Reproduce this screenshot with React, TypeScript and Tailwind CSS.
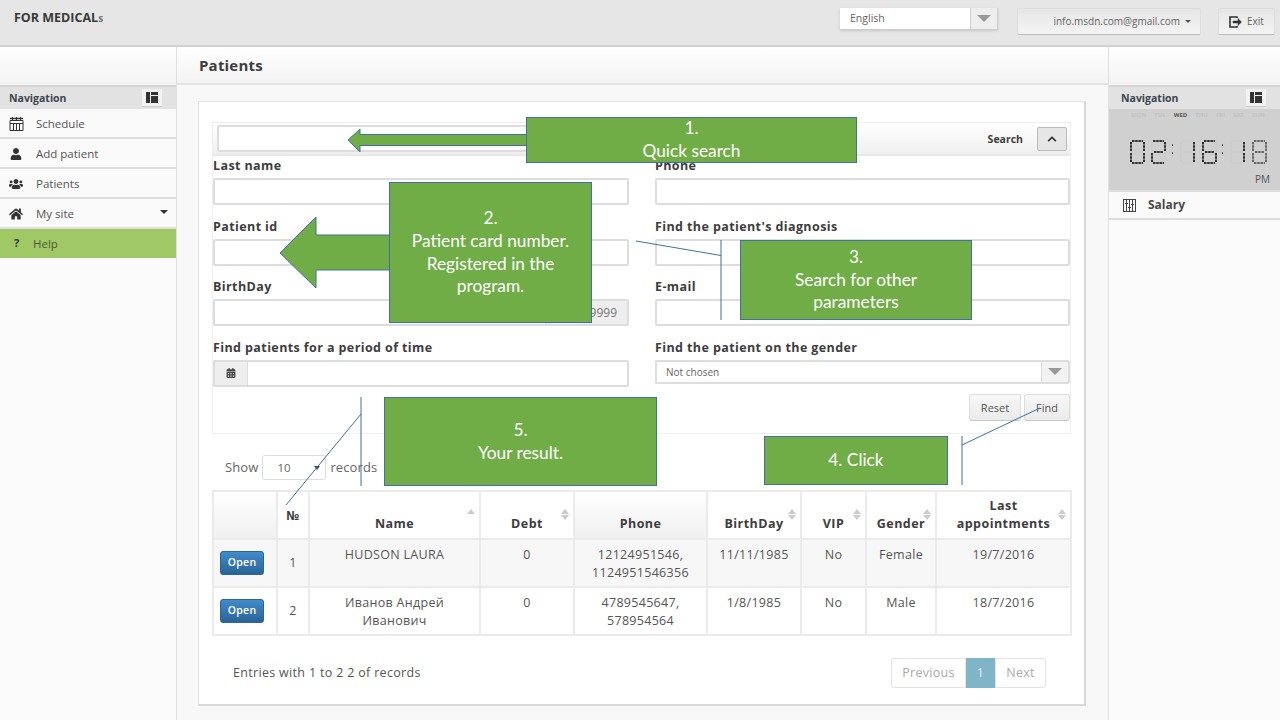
import React from "react";
import { FaUser, FaUsers, FaHome, FaCalendarAlt, FaChevronUp } from "react-icons/fa";

const font = { fontFamily: '"Open Sans","Noto Sans",sans-serif' };

function PanelIcon() {
  return (
    <svg width="12" height="11" viewBox="0 0 12 11" fill="#333">
      <rect x="0" y="0" width="4" height="11" />
      <rect x="5" y="0" width="7" height="3" />
      <rect x="5" y="4" width="7" height="7" />
    </svg>
  );
}

function CalIcon() {
  return (
    <svg width="15" height="14" viewBox="0 0 15 14" fill="none" stroke="#333">
      <path d="M1 3.5h13v10H1z" />
      <path d="M1 1.5h13" strokeWidth="1.5" />
      <path d="M3.5 0v3M7.5 0v3M11.5 0v3" />
      <path d="M1 6.5h13M4.5 6.5v7M7.5 6.5v7M10.5 6.5v7" />
    </svg>
  );
}

function SalaryIcon() {
  return (
    <svg width="13" height="13" viewBox="0 0 13 13" fill="none" stroke="#444">
      <rect x="0.5" y="0.5" width="12" height="12" />
      <path d="M3.5 1v11M6.5 1v11M9.5 1v11" />
      <path d="M2 4.5h3M5 8.5h3M8 5.5h3" />
    </svg>
  );
}

function ExitIcon() {
  return (
    <svg width="13" height="12" viewBox="0 0 13 12" fill="none" stroke="#333" strokeWidth="1.6">
      <path d="M8 2V1H1v10h7V10" />
      <path d="M4 5h5V2.5L12.5 6 9 9.5V7H4z" fill="#333" strokeWidth="0.5" />
    </svg>
  );
}

const SEG: Record<string, string> = {
  "0": "abcdef",
  "1": "bc",
  "2": "abged",
  "6": "acdefg",
  "8": "abcdefg",
};

function Digit({ d, ghost }: { d: string; ghost?: boolean }) {
  const on = SEG[d];
  const lines: Record<string, [number, number, number, number]> = {
    a: [2, 1, 13, 1],
    b: [14, 2, 14, 11],
    c: [14, 13, 14, 22],
    d: [2, 23, 13, 23],
    e: [1, 13, 1, 22],
    f: [1, 2, 1, 11],
    g: [3, 12, 12, 12],
  };
  return (
    <svg width="15" height="24" viewBox="0 0 15 24" className="shrink-0">
      {Object.keys(lines).map((k) => {
        const [x1, y1, x2, y2] = lines[k];
        const isOn = on.includes(k);
        return (
          <line
            key={k}
            x1={x1}
            y1={y1}
            x2={x2}
            y2={y2}
            stroke={isOn ? (ghost ? "#666" : "#2f2f2f") : "#cbcbcb"}
            strokeWidth="2"
            strokeDasharray="2.5 0.7"
          />
        );
      })}
    </svg>
  );
}

function Colon() {
  return (
    <div className="flex flex-col gap-[6px] w-[1px] mt-[-7px] shrink-0">
      <span className="block w-[1px] h-[2px] bg-[#555]" />
      <span className="block w-[1px] h-[2px] bg-[#555]" />
    </div>
  );
}

function NavHead({ left }: { left: string }) {
  return (
    <div className={`h-[24px] bg-[#e2e2e2] border-t-2 border-[#d4d4d4] flex items-center justify-between pr-[14px] ${left}`}>
      <span className="text-[10.5px] font-bold text-[#3c4650] pt-[2px]">Navigation</span>
      <span className="w-[20px] h-[18px] bg-[#f2f2f2] flex items-center justify-center border-b border-[#ccc]">
        <PanelIcon />
      </span>
    </div>
  );
}

function NavItem({ icon, label, caret }: { icon: React.ReactNode; label: string; caret?: boolean }) {
  return (
    <div className="h-[30px] pt-[2px] flex items-center border-b-2 border-[#ddd] bg-[#fafafa] relative text-[11.5px] text-[#555]">
      <span className="w-[32px] mr-[4px] flex justify-center text-[#333] text-[14px]">{icon}</span>
      <span>{label}</span>
      {caret && <span className="ml-auto mr-[8px] mt-[-4px] border-x-[4px] border-t-[4px] border-x-transparent border-t-[#333]" />}
    </div>
  );
}

function Field({ label, children }: { label: string; children?: React.ReactNode }) {
  return (
    <div className="h-[60.5px]">
      <div className="h-[18px] text-[12.5px] font-bold text-[#3d3d3d] tracking-[0.4px] leading-[20px]">{label}</div>
      <div className="h-[27px] mt-[4px]">
        {children ?? <div className="h-full border-2 border-[#ddd] rounded-[2px] bg-white" />}
      </div>
    </div>
  );
}

function Sort({ only }: { only?: boolean }) {
  return (
    <span className="absolute right-[4px] top-[17px] flex flex-col gap-[1px]">
      <span className="border-x-[4px] border-b-[5px] border-x-transparent border-b-[#ccc]" />
      {!only && <span className="border-x-[4px] border-t-[5px] border-x-transparent border-t-[#ccc]" />}
    </span>
  );
}

const th = "border-2 border-[#ebebeb] relative align-bottom pb-[6px] px-[4px] text-[12.5px] font-bold text-[#3d3d3d] tracking-[0.45px] leading-[17.5px] text-center bg-white";
const td = "border-2 border-[#ebebeb] align-top pt-[6px] px-[4px] text-[12.5px] text-[#555] tracking-[0.3px] leading-[17.5px] text-center";

function OpenBtn() {
  return (
    <span className="inline-block w-[44px] h-[24px] rounded-[3px] bg-gradient-to-b from-[#428bca] to-[#2a6496] border border-[#2b669a] text-white text-[10.5px] font-semibold leading-[20px] text-center">
      Open
    </span>
  );
}

function Callout({ className, lines }: { className: string; lines: string[] }) {
  return (
    <div
      className={`absolute bg-[#70ad47] border border-[#41719c] text-white text-[17.3px] leading-[22.8px] text-center flex flex-col items-center justify-center ${className}`}
      style={{ fontFamily: '"Lato","Open Sans",sans-serif' }}
    >
      {lines.map((l) => (
        <div key={l}>{l}</div>
      ))}
    </div>
  );
}

export default function App() {
  return (
    <div className="relative w-[1280px] h-[720px] overflow-hidden bg-[#f8f8f8] flex flex-col" style={font}>
      <header className="h-[47px] shrink-0 bg-[#e6e6e6] border-b-2 border-[#d2d2d2] flex items-start">
        <div className="ml-[14px] mt-[9px] text-[12.5px] font-bold text-[#3a3a3a] leading-[18px]">
          FOR MEDICAL<span className="text-[#777] text-[10px]">s</span>
        </div>
        <div className="ml-auto mt-[8px] w-[158px] h-[22px] bg-white border-b border-r border-[#ccc] flex text-[10.5px] text-[#666] items-center shadow-sm">
          <span className="pl-[10px] flex-1 pt-[1px]">English</span>
          <span className="w-[27px] h-full border-l border-[#ccc] bg-[#eee] flex items-center justify-center">
            <span className="border-x-[7px] border-t-[7px] border-x-transparent border-t-[#999]" />
          </span>
        </div>
        <div className="ml-[19px] mt-[8px] w-[184px] h-[27px] rounded-[2px] bg-gradient-to-b from-[#e6e6e6] to-[#f4f4f4] border border-[#ddd] border-b-[#bbb] flex items-center justify-end pr-[9px] text-[10px] text-[#666]">
          info.msdn.com@gmail.com
          <span className="ml-[5px] border-x-[3px] border-t-[3px] border-x-transparent border-t-[#555]" />
        </div>
        <div className="ml-[17px] mr-[5px] mt-[8px] w-[57px] h-[27px] rounded-[2px] bg-gradient-to-b from-[#e6e6e6] to-[#f4f4f4] border border-[#ddd] border-b-[#bbb] flex items-center justify-center gap-[5px] text-[10px] text-[#666]">
          <ExitIcon />
          Exit
        </div>
      </header>

      <div className="flex flex-1 min-h-0">
        <aside className="w-[177px] shrink-0 border-r border-[#e0e0e0] bg-[#fbfbfb]">
          <div className="h-[38px] bg-gradient-to-b from-white to-[#f3f3f3]" />
          <NavHead left="pl-[9px]" />
          <NavItem icon={<CalIcon />} label="Schedule" />
          <NavItem icon={<FaUser className="text-[12px]" />} label="Add patient" />
          <NavItem icon={<FaUsers />} label="Patients" />
          <NavItem icon={<FaHome />} label="My site" caret />
          <div className="h-[29px] bg-[#a0c864] flex items-center text-[11.5px] text-[#4a5a3a]">
            <span className="w-[33px] text-center text-[#333] font-bold text-[11px]">?</span>
            Help
          </div>
        </aside>

        <main className="flex-1 min-w-0 bg-[#f8f8f8] flex flex-col">
          <div className="h-[38px] shrink-0 bg-gradient-to-b from-white to-[#f3f3f3] border-b-2 border-[#e4e4e4] pl-[22px] text-[15px] font-bold text-[#3d3d3d] leading-[36px] tracking-[0.2px]">
            Patients
          </div>
          <section className="ml-[21px] mt-[16px] w-[888px] h-[605px] bg-white border border-[#e4e4e4] border-r-2 border-b-2 border-r-[#d8d8d8] border-b-[#d8d8d8] pt-[20px] pl-[13px] text-[#555]">
            <div className="w-[859px] h-[312px] border border-[#f0f0f0] border-t-[#eee]">
              <div className="h-[33px] bg-gradient-to-b from-white to-[#f0f0f0] border-b-2 border-[#e8e8e8] flex items-center pl-[4px] pr-[3px]">
                <div className="w-[340px] h-[27px] border-2 border-[#ddd] rounded-[2px] bg-white" />
                <span className="ml-auto text-[10.5px] font-bold text-[#3d3d3d] mt-[3px]">Search</span>
                <span className="ml-[14px] w-[30px] h-[24px] bg-[#e6e6e6] border border-[#bbb] rounded-[2px] flex items-center justify-center text-[#333] text-[10px]">
                  <FaChevronUp />
                </span>
              </div>
              <div className="grid grid-cols-[416px_415px] gap-x-[26px]">
                <div>
                  <Field label="Last name" />
                  <Field label="Patient id" />
                  <Field label="BirthDay">
                    <div className="h-full border-2 border-[#ddd] rounded-[2px] bg-white flex justify-end">
                      <span className="w-[82px] bg-[#eee] border-l border-[#ddd] text-[12px] text-[#777] leading-[23px] text-right pr-[10px]">99/99/9999</span>
                    </div>
                  </Field>
                  <Field label="Find patients for a period of time">
                    <div className="h-full border-2 border-[#ddd] rounded-[2px] bg-white flex">
                      <span className="w-[33px] bg-[#eee] border-r border-[#ddd] flex items-center justify-center text-[10px] text-[#444]">
                        <FaCalendarAlt />
                      </span>
                    </div>
                  </Field>
                </div>
                <div>
                  <Field label="Phone" />
                  <Field label="Find the patient's diagnosis" />
                  <Field label="E-mail" />
                  <Field label="Find the patient on the gender">
                    <div className="h-[24px] border-2 border-[#ddd] rounded-[2px] bg-white flex items-center text-[10px] text-[#666]">
                      <span className="pl-[9px] flex-1 pt-[1px]">Not chosen</span>
                      <span className="w-[27px] h-full border-l border-[#ddd] bg-[#f2f2f2] flex items-center justify-center">
                        <span className="border-x-[7px] border-t-[7px] border-x-transparent border-t-[#999]" />
                      </span>
                    </div>
                  </Field>
                </div>
              </div>
              <div className="flex justify-end gap-[3px] mt-[-4px]">
                <span className="w-[52px] h-[27px] bg-gradient-to-b from-[#f7f7f7] to-[#ebebeb] border border-[#ddd] border-b-[#c8c8c8] rounded-[3px] text-[11px] text-[#555] text-center leading-[25px]">Reset</span>
                <span className="w-[46px] h-[27px] bg-gradient-to-b from-[#f7f7f7] to-[#ebebeb] border border-[#ddd] border-b-[#c8c8c8] rounded-[3px] text-[11px] text-[#555] text-center leading-[25px]">Find</span>
              </div>
            </div>

            <div className="flex items-center h-[25px] mt-[21px] pl-[13px] text-[13px] text-[#666] tracking-[0.1px]">
              Show
              <span className="ml-[4px] w-[64px] h-[25px] border border-[#ddd] rounded-[3px] flex items-center pl-[14px] pr-[5px] text-[11.5px]">
                10
                <span className="ml-auto border-x-[3px] border-t-[4px] border-x-transparent border-t-[#444]" />
              </span>
              <span className="ml-[4px]">records</span>
            </div>

            <table className="w-[858px] mt-[10px] border-collapse table-fixed">
              <colgroup>
                <col className="w-[64px]" />
                <col className="w-[32px]" />
                <col className="w-[171px]" />
                <col className="w-[94px]" />
                <col className="w-[133px]" />
                <col className="w-[94px]" />
                <col className="w-[65px]" />
                <col className="w-[70px]" />
                <col className="w-[135px]" />
              </colgroup>
              <thead>
                <tr className="h-[48px]">
                  <th className="border-2 border-[#ebebeb] bg-gradient-to-b from-white to-[#f0f0f0]" />
                  <th className={`${th} !align-top pt-[15px] !px-0`}>№</th>
                  <th className={th}>Name<Sort only /></th>
                  <th className={th}>Debt<Sort /></th>
                  <th className={`${th} !bg-gradient-to-b from-white to-[#f0f0f0]`}>Phone</th>
                  <th className={th}>BirthDay<Sort /></th>
                  <th className={th}>VIP<Sort /></th>
                  <th className={`${th} !px-0`}>Gender<Sort /></th>
                  <th className={th}>Last<br />appointments<Sort /></th>
                </tr>
              </thead>
              <tbody>
                <tr className="h-[48px] bg-[#f7f7f7]">
                  <td className={`${td} !align-middle !pt-0 !pb-[1px] !pl-0 !pr-[6px]`}><OpenBtn /></td>
                  <td className={`${td} !align-middle !pt-0 !px-0`}>1</td>
                  <td className={td}>HUDSON LAURA</td>
                  <td className={td}>0</td>
                  <td className={td}>12124951546,<br />1124951546356</td>
                  <td className={`${td} !px-0`}>11/11/1985</td>
                  <td className={td}>No</td>
                  <td className={td}>Female</td>
                  <td className={td}>19/7/2016</td>
                </tr>
                <tr className="h-[48px] bg-white">
                  <td className={`${td} !align-middle !pt-0 !pb-[1px] !pl-0 !pr-[6px]`}><OpenBtn /></td>
                  <td className={`${td} !align-middle !pt-0 !px-0`}>2</td>
                  <td className={td}>Иванов Андрей<br />Иванович</td>
                  <td className={td}>0</td>
                  <td className={td}>4789545647,<br />578954564</td>
                  <td className={td}>1/8/1985</td>
                  <td className={td}>No</td>
                  <td className={td}>Male</td>
                  <td className={td}>18/7/2016</td>
                </tr>
              </tbody>
            </table>

            <div className="flex items-center mt-[22px] w-[834px] pl-[21px]">
              <span className="text-[12.5px] text-[#555] tracking-[0.32px]">Entries with 1 to 2 2 of records</span>
              <div className="ml-auto flex h-[30px] text-[12.5px] text-[#aaa] tracking-[0.3px]">
                <span className="w-[75px] border border-[#e4e4e4] rounded-l-[3px] text-center leading-[28px]">Previous</span>
                <span className="w-[29px] bg-[#7fb5c6] text-[#e8f2f5] text-center leading-[30px]">1</span>
                <span className="w-[51px] border border-[#e4e4e4] rounded-r-[3px] text-center leading-[28px]">Next</span>
              </div>
            </div>
          </section>
        </main>

        <aside className="w-[172px] shrink-0 border-l border-[#e0e0e0] bg-[#fbfbfb]">
          <div className="h-[38px] bg-gradient-to-b from-white to-[#f3f3f3]" />
          <NavHead left="pl-[12px]" />
          <div className="h-[81px] bg-[#d0d0d0] relative">
            <div className="flex gap-[8px] pt-[2px] pl-[22px] text-[6px] font-bold text-[#c2c2c2]">
              <span>MON</span><span>TUE</span><span className="text-[#555]">WED</span><span>THU</span><span>FRI</span><span>SAT</span><span>SUN</span>
            </div>
            <div className="flex items-center ml-[21px] mt-[20px]" aria-label="02:16:18">
              <Digit d="0" />
              <div className="w-[6px]" />
              <Digit d="2" />
              <div className="w-[6px]" />
              <Colon />
              <div className="w-[7px]" />
              <Digit d="1" />
              <div className="w-[7px]" />
              <Digit d="6" />
              <div className="w-[5px]" />
              <Colon />
              <div className="w-[7px]" />
              <Digit d="1" />
              <div className="w-[7px]" />
              <Digit d="8" ghost />
            </div>
            <div className="absolute right-[10px] bottom-[3px] text-[10px] text-[#555]">PM</div>
          </div>
          <div className="h-[30px] border-y-2 border-[#ddd] bg-[#fafafa] flex items-center pl-[14px] text-[12px] font-bold text-[#4a4a4a] gap-[12px]">
            <SalaryIcon />
            Salary
          </div>
        </aside>
      </div>

      {/* Annotation layer drawn over the screenshot */}
      <svg className="absolute inset-0 pointer-events-none" width="1280" height="720">
        <polygon points="348,140 360,129 360,134.5 527,134.5 527,145.5 360,145.5 360,152" fill="#70ad47" stroke="#41719c" />
        <polygon points="280,253 316,217 316,235 390,235 390,270 316,270 316,288" fill="#70ad47" stroke="#41719c" />
        <path d="M636 241 L721 255.5 M721 240 V320" stroke="#41719c" fill="none" />
        <path d="M962 436 V485 M962 445 L1040 408" stroke="#41719c" fill="none" />
        <path d="M361 397 V486 M361 414 L286 505" stroke="#41719c" fill="none" />
      </svg>
      <Callout className="left-[526px] top-[117px] w-[331px] h-[46px]" lines={["1.", "Quick search"]} />
      <Callout className="left-[389px] top-[182px] w-[203px] h-[141px]" lines={["2.", "Patient card number.", "Registered in the", "program."]} />
      <Callout className="left-[740px] top-[240px] w-[232px] h-[80px]" lines={["3.", "Search for other", "parameters"]} />
      <Callout className="left-[764px] top-[436px] w-[184px] h-[49px]" lines={["4. Click"]} />
      <Callout className="left-[384px] top-[397px] w-[273px] h-[89px]" lines={["5.", "Your result."]} />
    </div>
  );
}
